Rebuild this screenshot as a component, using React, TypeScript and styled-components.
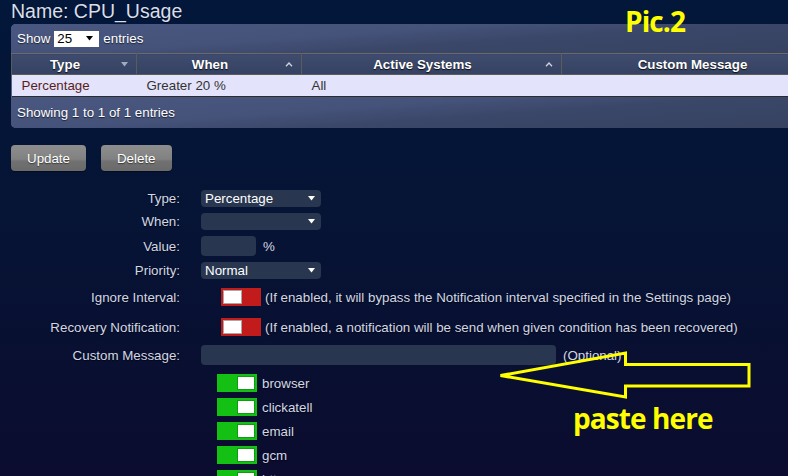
import React from "react";
import styled, { createGlobalStyle } from "styled-components";

const GlobalStyle = createGlobalStyle`
  html, body { margin: 0; padding: 0; }
  body {
    width: 788px;
    height: 476px;
    overflow: hidden;
    background: linear-gradient(180deg, #02173a 0%, #061435 45%, #0b0c2f 100%);
    font-family: "Liberation Sans", Arial, sans-serif;
  }
`;

const Page = styled.div`
  position: relative;
  box-sizing: border-box;
  height: 476px;
  padding-left: 11px;
  overflow: hidden;
  color: #d4d8e4;
  font-size: 13.33px;
`;

const Title = styled.h1`
  margin: 0;
  font-weight: normal;
  font-size: 19.5px;
  line-height: 22px;
  color: #dadeea;
  text-shadow: 0 1px 1px rgba(0, 0, 0, 0.5);
`;

const Panel = styled.section`
  margin-top: 2px;
  width: 831px;
  border-radius: 5px;
  overflow: hidden;
  background: #3d4a6b;
  box-shadow: inset 1px 0 0 #56627f;
`;

const PanelBar = styled.div<{ $h: number }>`
  height: ${(p) => p.$h}px;
  display: flex;
  align-items: center;
  gap: 4px;
  padding-left: 6px;
  color: #ffffff;
  text-shadow: 0 1px 1px rgba(0, 0, 0, 0.6);
  background: linear-gradient(176deg, #4a5780 0%, #45527a 38%, #3b4769 58%, #36425f 100%);
`;

const LengthSelect = styled.span`
  box-sizing: border-box;
  width: 45px;
  height: 16px;
  display: inline-flex;
  align-items: center;
  justify-content: space-between;
  padding: 0 6px 0 3px;
  background: #ffffff;
  color: #000000;
  text-shadow: none;
`;

const Table = styled.table`
  width: 100%;
  border-collapse: collapse;
  table-layout: fixed;
`;

const Th = styled.th<{ $w?: number }>`
  ${(p) => (p.$w ? `width: ${p.$w}px;` : "")}
  height: 20px;
  padding: 0;
  background: linear-gradient(180deg, #404c6e 0%, #364262 100%);
  border: 1px solid #5b5b5b;
  border-top-color: #6a6a6a;
  color: #ffffff;
  font-weight: bold;
  font-size: 13.33px;
  text-shadow: 0 1px 1px rgba(0, 0, 0, 0.8);
`;

const HeadInner = styled.div`
  display: flex;
  align-items: center;
`;

const HeadLabel = styled.span`
  flex: 1;
  text-align: center;
`;

const SortSlot = styled.span`
  width: 12px;
  margin-right: 6px;
  display: flex;
  justify-content: center;
`;

const Td = styled.td<{ $tone: string }>`
  height: 21px;
  padding: 0 0 0 10px;
  background: #e3e3fb;
  border-bottom: 1px solid #2c2c2c;
  color: ${(p) => p.$tone};
  font-size: 13.33px;
  white-space: nowrap;
`;

const ButtonRow = styled.div`
  margin-top: 17px;
  display: flex;
  gap: 15px;
`;

const Button = styled.button`
  height: 26px;
  padding: 0 16px;
  border: none;
  border-radius: 4px;
  background: linear-gradient(180deg, #8e8e8e 0%, #818181 55%, #717171 62%, #6a6a6a 100%);
  color: #ffffff;
  font-family: "Liberation Sans", Arial, sans-serif;
  font-size: 13.33px;
  text-shadow: 0 1px 1px rgba(0, 0, 0, 0.5);
  box-shadow: 0 1px 1px rgba(0, 0, 0, 0.4);
`;

const Form = styled.div`
  margin-top: 19px;
  display: flex;
  flex-direction: column;
  gap: 6px;
`;

const Row = styled.div<{ $pad?: number }>`
  display: grid;
  grid-template-columns: 169px auto;
  column-gap: 21px;
  align-items: center;
  padding: ${(p) => p.$pad || 0}px 0;
`;

const Label = styled.div`
  text-align: right;
  color: #d3d7e3;
  white-space: nowrap;
  line-height: 15px;
  text-shadow: 0 1px 1px rgba(0, 0, 0, 0.6);
`;

const Control = styled.div<{ $column?: boolean; $indent?: number }>`
  display: flex;
  flex-direction: ${(p) => (p.$column ? "column" : "row")};
  align-items: ${(p) => (p.$column ? "flex-start" : "center")};
  gap: ${(p) => (p.$column ? 6 : 0)}px;
  padding-left: ${(p) => p.$indent || 0}px;
  white-space: nowrap;
  line-height: 15px;
`;

const Select = styled.div`
  box-sizing: border-box;
  width: 120px;
  height: 17px;
  display: flex;
  align-items: center;
  justify-content: space-between;
  padding: 0 6px 0 4px;
  border-radius: 4px;
  background: #283650;
  color: #ffffff;
`;

const Field = styled.div<{ $w: number }>`
  box-sizing: border-box;
  width: ${(p) => p.$w}px;
  height: 20px;
  border-radius: 4px;
  background: #283650;
`;

const Suffix = styled.span`
  margin-left: 7px;
  color: #d3d7e3;
`;

const Toggle = styled.span<{ $on: boolean; $offset?: number }>`
  box-sizing: border-box;
  flex-shrink: 0;
  width: 40px;
  height: 18px;
  margin-left: ${(p) => p.$offset || 0}px;
  padding: 2px;
  display: inline-flex;
  align-items: center;
  justify-content: ${(p) => (p.$on ? "flex-end" : "flex-start")};
  background: ${(p) => (p.$on ? "#14c014" : "#c21b1b")};
`;

const Knob = styled.span<{ $on: boolean }>`
  box-sizing: border-box;
  width: ${(p) => (p.$on ? 18 : 19)}px;
  height: 14px;
  background: #ffffff;
  border: 1px solid ${(p) => (p.$on ? "#0f9e0f" : "#a8a8a8")};
`;

const Hint = styled.span<{ $gap: number }>`
  margin-left: ${(p) => p.$gap}px;
  color: #d3d7e3;
  text-shadow: 0 1px 1px rgba(0, 0, 0, 0.6);
`;

const Channel = styled.div`
  display: flex;
  align-items: center;
`;

const Note = styled.div<{ $x: number; $y: number }>`
  position: absolute;
  left: ${(p) => p.$x}px;
  top: ${(p) => p.$y}px;
  z-index: 2;
  font-family: "Open Sans", "Liberation Sans", sans-serif;
  font-weight: bold;
  font-size: 28px;
  line-height: 28px;
  letter-spacing: -0.9px;
  color: #ffff00;
  white-space: nowrap;
`;

const ArrowLayer = styled.svg`
  position: absolute;
  left: 490px;
  top: 345px;
  z-index: 2;
  overflow: visible;
`;

const DownTri = ({ color }: { color: string }) => (
  <svg width="7" height="5" viewBox="0 0 7 5">
    <polygon points="0,0 7,0 3.5,4.5" fill={color} />
  </svg>
);

const Caret = () => (
  <svg width="8" height="5" viewBox="0 0 8 5">
    <polyline points="1,4.2 4,1 7,4.2" fill="none" stroke="#cfd3de" strokeWidth="1.3" />
  </svg>
);

const channels = ["browser", "clickatell", "email", "gcm", "http"];

export default function App() {
  return (
    <>
      <GlobalStyle />
      <Page>
        <Title>Name: CPU_Usage</Title>
        <Panel>
          <PanelBar $h={29}>
            <span>Show</span>
            <LengthSelect>
              <span>25</span>
              <DownTri color="#000" />
            </LengthSelect>
            <span>entries</span>
          </PanelBar>
          <Table>
            <thead>
              <tr>
                <Th $w={124}>
                  <HeadInner>
                    <HeadLabel>Type</HeadLabel>
                    <SortSlot>
                      <DownTri color="#a2aac0" />
                    </SortSlot>
                  </HeadInner>
                </Th>
                <Th $w={164}>
                  <HeadInner>
                    <HeadLabel>When</HeadLabel>
                    <SortSlot>
                      <Caret />
                    </SortSlot>
                  </HeadInner>
                </Th>
                <Th $w={259}>
                  <HeadInner>
                    <HeadLabel>Active Systems</HeadLabel>
                    <SortSlot>
                      <Caret />
                    </SortSlot>
                  </HeadInner>
                </Th>
                <Th>
                  <HeadInner>
                    <HeadLabel>Custom Message</HeadLabel>
                    <SortSlot />
                  </HeadInner>
                </Th>
              </tr>
            </thead>
            <tbody>
              <tr>
                <Td $tone="#5a1d1d">Percentage</Td>
                <Td $tone="#333333">Greater 20 %</Td>
                <Td $tone="#333333">All</Td>
                <Td $tone="#333333"></Td>
              </tr>
            </tbody>
          </Table>
          <PanelBar $h={31}>Showing 1 to 1 of 1 entries</PanelBar>
        </Panel>

        <ButtonRow>
          <Button>Update</Button>
          <Button>Delete</Button>
        </ButtonRow>

        <Form>
          <Row>
            <Label>Type:</Label>
            <Control>
              <Select>
                <span>Percentage</span>
                <DownTri color="#ffffff" />
              </Select>
            </Control>
          </Row>
          <Row>
            <Label>When:</Label>
            <Control>
              <Select>
                <span></span>
                <DownTri color="#ffffff" />
              </Select>
            </Control>
          </Row>
          <Row>
            <Label>Value:</Label>
            <Control>
              <Field $w={55} />
              <Suffix>%</Suffix>
            </Control>
          </Row>
          <Row>
            <Label>Priority:</Label>
            <Control>
              <Select>
                <span>Normal</span>
                <DownTri color="#ffffff" />
              </Select>
            </Control>
          </Row>
          <Row $pad={3}>
            <Label>Ignore Interval:</Label>
            <Control>
              <Toggle $on={false} $offset={20}>
                <Knob $on={false} />
              </Toggle>
              <Hint $gap={4}>
                (If enabled, it will bypass the Notification interval specified in the Settings page)
              </Hint>
            </Control>
          </Row>
          <Row $pad={3}>
            <Label>Recovery Notification:</Label>
            <Control>
              <Toggle $on={false} $offset={20}>
                <Knob $on={false} />
              </Toggle>
              <Hint $gap={4}>
                (If enabled, a notification will be send when given condition has been recovered)
              </Hint>
            </Control>
          </Row>
          <Row>
            <Label>Custom Message:</Label>
            <Control>
              <Field $w={355} />
              <Suffix>(Optional)</Suffix>
            </Control>
          </Row>
          <Row $pad={3}>
            <Label />
            <Control $column $indent={16}>
              {channels.map((c) => (
                <Channel key={c}>
                  <Toggle $on>
                    <Knob $on />
                  </Toggle>
                  <Hint $gap={5}>{c}</Hint>
                </Channel>
              ))}
            </Control>
          </Row>
        </Form>

        <Note $x={625} $y={7}>Pic.2</Note>
        <ArrowLayer width="270" height="60" viewBox="490 345 270 60">
          <polygon
            points="500.5,375.5 625.5,353 625.5,364.5 749,364.5 749,386 625.5,386 625.5,397"
            fill="none"
            stroke="#ffff00"
            strokeWidth="3"
            strokeLinejoin="miter"
          />
        </ArrowLayer>
        <Note $x={573} $y={404}>paste here</Note>
      </Page>
    </>
  );
}
